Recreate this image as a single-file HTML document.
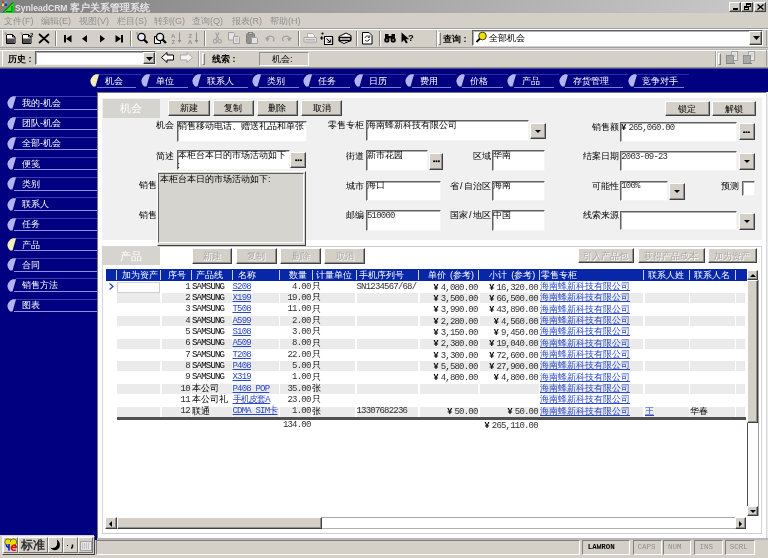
<!DOCTYPE html><html><head><meta charset="utf-8"><style>
*{box-sizing:border-box}
html,body{-webkit-font-smoothing:antialiased;margin:0;padding:0;width:768px;height:558px;overflow:hidden;background:#d4d0c8;font-family:"Liberation Sans",sans-serif;font-size:9px;color:#000}
.a{position:absolute}
.btn{position:absolute;background:#d4d0c8;border-top:1px solid #fff;border-left:1px solid #fff;border-right:1px solid #404040;border-bottom:1px solid #404040;box-shadow:inset -1px -1px 0 #909090;text-align:center;font-size:9px;white-space:nowrap}
.dbtn{color:#a0a0a0}
.fld{position:absolute;background:#fff;border-top:1px solid #606060;border-left:1px solid #606060;border-right:1px solid #f4f4f4;border-bottom:1px solid #f4f4f4;box-shadow:inset 1px 1px 0 #b0b0b0;font-size:9px;line-height:10px;white-space:nowrap;overflow:hidden}
.lbl{position:absolute;font-size:9px;line-height:10px;white-space:nowrap}
.sep{position:absolute;width:2px;border-left:1px solid #808080;border-right:1px solid #fff}
.t{position:absolute;white-space:nowrap;line-height:10px}
.mono{font-family:"Liberation Mono",monospace}
.yen{font-family:"Liberation Sans",sans-serif;font-weight:bold;letter-spacing:0;margin-right:2.2px;color:#000}
.m{font-family:"Liberation Mono",monospace;font-size:9px;letter-spacing:-0.8px;color:#303030}
.lf{position:absolute;width:9px;height:13px;border-radius:9px 0 0 9px / 13px 0 0 13px}
.ul{position:absolute;height:1px}
</style></head><body><div style="position:absolute;left:0;top:0;width:768px;height:558px;will-change:transform">
<div class="a" style="left:0;top:0;width:768px;height:13px;background:linear-gradient(to right,#808080,#cacaca)"></div>
<svg class="a" style="left:1px;top:1px" width="13" height="12" viewBox="0 0 13 12"><path d="M1 12 L13 0 L13 12 Z" fill="#10d010"/><path d="M3 11 L12 2 L12 11Z" fill="#30e030"/><path d="M2 11.5 L12 1.5" stroke="#005000" stroke-width="1"/><path d="M5 10.5 L11 10.5 L11 5" stroke="#007000" fill="none"/><rect x="1" y="0.5" width="2.5" height="2" fill="#e02020"/><rect x="3.5" y="0.5" width="2.5" height="2" fill="#30d0f0"/><rect x="1" y="2.5" width="2.5" height="2.5" fill="#f0e020"/><rect x="3.5" y="2.5" width="2.5" height="2.5" fill="#2030d0"/></svg>
<div class="t" style="left:15px;top:1.5px;color:#e4e4e4;font-weight:bold;font-size:8.6px;line-height:11px">SynleadCRM <span style="font-size:9.6px;font-weight:bold">客户关系管理系统</span></div>
<div class="btn" style="left:729px;top:1.5px;width:12px;height:10px"><div class="a" style="left:3px;top:5px;width:5px;height:2px;background:#000"></div></div>
<div class="btn" style="left:741px;top:1.5px;width:12px;height:10px"><div class="a" style="left:4px;top:0.5px;width:5px;height:4px;border:1px solid #000;border-top-width:2px"></div><div class="a" style="left:2px;top:3px;width:5px;height:4.5px;border:1px solid #000;border-top-width:2px;background:#d4d0c8"></div></div>
<div class="btn" style="left:754px;top:1.5px;width:12px;height:10px"><svg class="a" style="left:2px;top:1px" width="7" height="6"><path d="M0.5 0.5L6.5 5.5M6.5 0.5L0.5 5.5" stroke="#000" stroke-width="1.4"/></svg></div>
<div class="t" style="left:4px;top:16px;color:#909090;font-size:9px">文件(F)</div>
<div class="t" style="left:41px;top:16px;color:#909090;font-size:9px">编辑(E)</div>
<div class="t" style="left:79px;top:16px;color:#909090;font-size:9px">视图(V)</div>
<div class="t" style="left:117px;top:16px;color:#909090;font-size:9px">栏目(S)</div>
<div class="t" style="left:154px;top:16px;color:#909090;font-size:9px">转到(G)</div>
<div class="t" style="left:192px;top:16px;color:#909090;font-size:9px">查询(Q)</div>
<div class="t" style="left:231.5px;top:16px;color:#909090;font-size:9px">报表(R)</div>
<div class="t" style="left:270px;top:16px;color:#909090;font-size:9px">帮助(H)</div>
<div class="a" style="left:0;top:28px;width:768px;height:1px;background:#a0a0a0"></div>
<div class="a" style="left:0;top:29px;width:768px;height:1px;background:#fff"></div>
<div class="a" style="left:0;top:47px;width:768px;height:1px;background:#a0a0a0"></div>
<div class="a" style="left:0;top:49px;width:768px;height:1px;background:#b4b4b4"></div>
<div class="a" style="left:0;top:50px;width:768px;height:1px;background:#fff"></div>
<div class="a" style="left:0;top:67px;width:768px;height:1px;background:#909090"></div>
<div class="a" style="left:2px;top:30px;width:1px;height:16px;background:#fff"></div>
<div class="a" style="left:2px;top:50px;width:1px;height:16px;background:#fff"></div>
<div class="a" style="left:766px;top:30px;width:1px;height:16px;background:#a0a0a0"></div>
<div class="a" style="left:766px;top:50px;width:1px;height:16px;background:#a0a0a0"></div>
<svg class="a" style="left:4px;top:32px" width="12" height="12" viewBox="0 0 12 12"><path d="M2.5 2.5h6l2.5 2.5v6.5h-8.5z" fill="#fff" stroke="#000"/><path d="M8.5 2.5v2.5h2.5" fill="none" stroke="#000"/><rect x="3" y="6.5" width="7.5" height="4.5" fill="#505050"/><path d="M0 0.5l3 2M1.5 0v3M0 2h3" stroke="#a0a0a0" stroke-width="0.8"/></svg>
<svg class="a" style="left:20px;top:32px" width="14" height="12" viewBox="0 0 14 12"><path d="M2.5 2.5h6l2.5 2.5v6.5h-8.5z" fill="#fff" stroke="#000"/><path d="M8.5 2.5v2.5h2.5" fill="none" stroke="#000"/><rect x="3" y="6.5" width="7.5" height="4.5" fill="#505050"/><path d="M0 0.5l3 2M1.5 0v3" stroke="#a0a0a0" stroke-width="0.8"/><text x="10" y="5" font-size="6" font-weight="bold" font-family="Liberation Sans">2</text></svg>
<svg class="a" style="left:38px;top:33px" width="12" height="11" viewBox="0 0 12 11"><path d="M1 1L11 10M11 1L1 10" stroke="#000" stroke-width="1.7"/></svg>
<div class="sep" style="left:55px;top:31px;height:15px"></div>
<svg class="a" style="left:64px;top:35px" width="8" height="8" viewBox="0 0 8 8"><rect x="0" y="0" width="2" height="7.5" fill="#000"/><path d="M7.5 0L2 3.75L7.5 7.5Z" fill="#000"/></svg>
<svg class="a" style="left:82px;top:35px" width="6" height="8" viewBox="0 0 6 8"><path d="M5 0L0 3.75L5 7.5Z" fill="#000"/></svg>
<svg class="a" style="left:100px;top:35px" width="6" height="8" viewBox="0 0 6 8"><path d="M0 0L5 3.75L0 7.5Z" fill="#000"/></svg>
<svg class="a" style="left:115px;top:35px" width="8" height="8" viewBox="0 0 8 8"><rect x="6" y="0" width="2" height="7.5" fill="#000"/><path d="M0.5 0L6 3.75L0.5 7.5Z" fill="#000"/></svg>
<div class="sep" style="left:130px;top:31px;height:15px"></div>
<svg class="a" style="left:136px;top:32px" width="13" height="12" viewBox="0 0 13 12"><circle cx="5.5" cy="5" r="3.6" fill="#e8e8ff" stroke="#000" stroke-width="1.4"/><path d="M8 7.5L11.5 11" stroke="#000" stroke-width="2.2"/><path d="M0 0.5l2.5 2M1.2 0v3" stroke="#909090" stroke-width="0.8"/></svg>
<svg class="a" style="left:153px;top:32px" width="14" height="12" viewBox="0 0 14 12"><path d="M1.5 4.5h5l1 1v6h-6z" fill="#fff" stroke="#000"/><circle cx="7" cy="5" r="3.6" fill="#e8e8e8" stroke="#000" stroke-width="1.4"/><path d="M9.5 7.5L13 11" stroke="#000" stroke-width="2.2"/></svg>
<svg class="a" style="left:171px;top:32px" width="12" height="12" viewBox="0 0 12 12"><text x="0" y="5.5" font-size="6" font-weight="bold" font-family="Liberation Sans" fill="#909090">A</text><text x="0.5" y="11.5" font-size="6" font-weight="bold" font-family="Liberation Sans" fill="#909090">Z</text><path d="M8.5 0.5v9.5" stroke="#909090"/><path d="M6.5 8l2 3l2-3z" fill="#909090"/></svg>
<svg class="a" style="left:188px;top:32px" width="12" height="12" viewBox="0 0 12 12"><text x="0.5" y="5.5" font-size="6" font-weight="bold" font-family="Liberation Sans" fill="#909090">Z</text><text x="0" y="11.5" font-size="6" font-weight="bold" font-family="Liberation Sans" fill="#909090">A</text><path d="M8.5 0.5v9.5" stroke="#909090"/><path d="M6.5 8l2 3l2-3z" fill="#909090"/></svg>
<div class="sep" style="left:204px;top:31px;height:15px"></div>
<svg class="a" style="left:213px;top:32px" width="9" height="12" viewBox="0 0 9 12"><circle cx="2" cy="9.3" r="1.8" fill="none" stroke="#a0a0a0" stroke-width="1.1"/><circle cx="6.6" cy="9.3" r="1.8" fill="none" stroke="#a0a0a0" stroke-width="1.1"/><path d="M2.8 7.5L6 0.5M5.8 7.5L2.6 0.5" stroke="#a0a0a0" stroke-width="1.1"/></svg>
<svg class="a" style="left:228px;top:32px" width="13" height="12" viewBox="0 0 13 12"><path d="M0.5 0.5h5l1 1v6.5h-6z" fill="#e4e4e4" stroke="#a0a0a0"/><path d="M5.5 4.5h5l1 1v6h-6z" fill="#e4e4e4" stroke="#a0a0a0"/><path d="M7 7h3M7 9h3" stroke="#b0b0b0"/></svg>
<svg class="a" style="left:246px;top:32px" width="13" height="12" viewBox="0 0 13 12"><rect x="0.5" y="1.5" width="8" height="10" rx="1" fill="#909090" stroke="#808080"/><rect x="2.5" y="0.5" width="4" height="2" fill="#c0c0c0" stroke="#808080"/><path d="M5.5 5.5h5l1 1v5h-6z" fill="#e4e4e4" stroke="#a0a0a0"/></svg>
<svg class="a" style="left:264px;top:34px" width="12" height="8" viewBox="0 0 12 8"><path d="M3 6.5C2 3 5 1.5 8 2.5C10.5 3.5 10.5 6 9 7" stroke="#a0a0a0" fill="none" stroke-width="1.3"/><path d="M0.5 3.5L3.5 7.5L5.5 4z" fill="#a0a0a0"/></svg>
<svg class="a" style="left:281px;top:34px" width="12" height="8" viewBox="0 0 12 8"><path d="M8.5 6.5C9.5 3 6.5 1.5 3.5 2.5C1 3.5 1 6 2.5 7" stroke="#a0a0a0" fill="none" stroke-width="1.3"/><path d="M11 3.5L8 7.5L6 4z" fill="#a0a0a0"/></svg>
<div class="sep" style="left:298px;top:31px;height:15px"></div>
<svg class="a" style="left:303px;top:32px" width="14" height="12" viewBox="0 0 14 12"><path d="M4.5 1.5h5l2 2v2.5h-7z" fill="#f4f4f4" stroke="#b0b0b0"/><path d="M1 5.5h12.5v4.5h-12.5z" fill="#e4e4e4" stroke="#a8a8a8"/><path d="M2.5 7.8h9.5" stroke="#a8a8a8" stroke-width="1.2"/><path d="M2 10.8h11" stroke="#b8b8b8"/></svg>
<svg class="a" style="left:320px;top:32px" width="14" height="13" viewBox="0 0 14 13"><circle cx="2.5" cy="1.5" r="1.1" fill="#000"/><path d="M0 6h3.5M1.7 4.3v3.4" stroke="#000" stroke-width="1.1"/><rect x="4.5" y="4.5" width="8" height="8" fill="#fff" stroke="#000"/><rect x="6" y="6" width="5" height="5" fill="#d8d8d8"/><path d="M6.5 6.5l3.5 3.5M10.3 7.5v2.8h-2.8" stroke="#000" fill="none"/><path d="M12.5 5v8h-8" stroke="#000" stroke-width="1.4" fill="none"/></svg>
<svg class="a" style="left:338px;top:32px" width="14" height="12" viewBox="0 0 14 12"><path d="M1 4.5l7-3.5l5 2.5v5l-7 3l-5-2.5z" fill="#fff" stroke="#000"/><path d="M1.5 5.5h11v3h-11z" fill="#fff" stroke="#000" stroke-width="1.3"/><path d="M4 7h6" stroke="#808080"/></svg>
<div class="sep" style="left:356px;top:31px;height:15px"></div>
<svg class="a" style="left:361px;top:32px" width="13" height="13" viewBox="0 0 13 13"><path d="M1.5 0.5h6.5l3 3v8.5h-9.5z" fill="#fff" stroke="#000"/><path d="M4 6a2.5 2.5 0 0 1 4.3-1.3M8.5 7a2.5 2.5 0 0 1-4.3 1.3" stroke="#303030" fill="none"/><path d="M8.8 3.5v1.8h-1.8" stroke="#303030" fill="none"/></svg>
<div class="sep" style="left:379px;top:31px;height:15px"></div>
<svg class="a" style="left:384px;top:33px" width="12" height="10" viewBox="0 0 12 10"><circle cx="2.8" cy="7" r="2.6" fill="#000"/><circle cx="9.2" cy="7" r="2.6" fill="#000"/><rect x="1" y="1" width="3.5" height="5" fill="#000"/><rect x="7.5" y="1" width="3.5" height="5" fill="#000"/><rect x="4" y="3" width="4" height="2.5" fill="#000"/><circle cx="2.8" cy="7" r="1" fill="#808080"/><circle cx="9.2" cy="7" r="1" fill="#808080"/></svg>
<svg class="a" style="left:401px;top:32px" width="14" height="12" viewBox="0 0 14 12"><path d="M0.5 0.5v10l2.5-2.5l2 3.5l1.8-1l-2-3.3h3.5z" fill="#000"/><text x="7" y="9" font-size="9.5" font-weight="bold" font-family="Liberation Sans">?</text></svg>
<div class="a" style="left:436px;top:30px;width:1px;height:17px;background:#a0a0a0"></div>
<div class="a" style="left:437px;top:30px;width:1px;height:17px;background:#fafafa"></div>
<div class="a" style="left:438px;top:32px;width:3px;height:13px;border-left:1px solid #fff;border-top:1px solid #fff;border-right:1px solid #808080;border-bottom:1px solid #808080"></div>
<div class="t" style="left:443px;top:34px;font-size:9px;font-weight:bold">查询 :</div>
<div class="fld" style="left:472px;top:30px;width:291px;height:16px;border-right:1px solid #fff;border-bottom:1px solid #fff"></div>
<svg class="a" style="left:475px;top:31px" width="13" height="12" viewBox="0 0 13 12"><circle cx="7.5" cy="5" r="3.8" fill="#f0e000" stroke="#404000"/><path d="M5 7.5L1.5 11" stroke="#000" stroke-width="1.8"/></svg>
<div class="t" style="left:489px;top:33px;font-size:9px">全部机会</div>
<div class="btn" style="left:749px;top:30.5px;width:12.5px;height:14px"><svg class="a" style="left:2.5px;top:4.5px" width="7" height="4"><path d="M0 0h7L3.5 4z" fill="#000"/></svg></div>
<div class="t" style="left:8px;top:54px;font-size:9px;font-weight:bold">历史 :</div>
<div class="fld" style="left:35px;top:51px;width:121px;height:14px"></div>
<div class="btn" style="left:143px;top:52px;width:12px;height:12px"><svg class="a" style="left:2px;top:4px" width="7" height="4"><path d="M0 0h7L3.5 4z" fill="#000"/></svg></div>
<svg class="a" style="left:161px;top:52px" width="13" height="11" viewBox="0 0 13 11"><path d="M0.5 5.5L6 0.5V3H12.5V8H6V10.5Z" fill="#fff" stroke="#000"/></svg>
<svg class="a" style="left:180px;top:52px" width="13" height="11" viewBox="0 0 13 11"><path d="M12.5 5.5L7 0.5V3H0.5V8H7V10.5Z" fill="#f4f4f4" stroke="#a8a8a8"/></svg>
<div class="a" style="left:198px;top:51px;width:1px;height:16px;background:#a0a0a0"></div>
<div class="a" style="left:199px;top:51px;width:1px;height:16px;background:#fafafa"></div>
<div class="a" style="left:201.5px;top:53px;width:3px;height:12px;border-left:1px solid #fff;border-top:1px solid #fff;border-right:1px solid #808080;border-bottom:1px solid #808080"></div>
<div class="t" style="left:212px;top:54px;font-size:9px;font-weight:bold">线索 :</div>
<div class="a" style="left:259px;top:51.5px;width:50px;height:14.5px;border-top:1px solid #909090;border-left:1px solid #909090;border-bottom:1px solid #fff;border-right:1px solid #fff"></div>
<div class="t" style="left:272px;top:54px;font-size:9px">机会:</div>
<div class="a" style="left:715px;top:51px;width:1px;height:16px;background:#a0a0a0"></div>
<div class="a" style="left:716px;top:51px;width:1px;height:16px;background:#fafafa"></div>
<div class="a" style="left:717.5px;top:53px;width:3px;height:12px;border-left:1px solid #fff;border-top:1px solid #fff;border-right:1px solid #808080;border-bottom:1px solid #808080"></div>
<svg class="a" style="left:726px;top:51px" width="13" height="13" viewBox="0 0 13 13"><rect x="5.5" y="0.5" width="6" height="9" fill="#e8e8e8" stroke="#a0a0a0"/><path d="M7 3h3M7 5h3" stroke="#c0c0c0"/><rect x="0.5" y="4.5" width="7" height="8" fill="#a8a8a8" stroke="#909090"/><path d="M0 12.5h9" stroke="#808080"/></svg>
<svg class="a" style="left:743px;top:51px" width="13" height="13" viewBox="0 0 13 13"><rect x="5.5" y="0.5" width="6" height="9" fill="#e8e8e8" stroke="#a0a0a0"/><path d="M7 3h3M7 5h3" stroke="#c0c0c0"/><rect x="0.5" y="4.5" width="7" height="8" fill="#a8a8a8" stroke="#909090"/><path d="M0 12.5h9" stroke="#808080"/></svg>
<div class="a" style="left:0;top:68px;width:768px;height:1px;background:#50508c"></div>
<div class="a" style="left:0;top:69px;width:768px;height:466px;background:#000080"></div>
<svg class="a" style="left:90.1px;top:74.2px" width="10" height="13" viewBox="-0.5 -0.2 10 13"><path d="M5.2 0 L8.6 0 L5 12.4 L2.6 12.4 C0.6 10.4 -0.3 8 0 6 C0.4 3.4 2.6 1 5.2 0 Z" fill="#f0f0b8"/></svg>
<div class="ul" style="left:98.6px;top:74px;width:42.9px;background:#2c2ca4"></div>
<div class="ul" style="left:96.6px;top:87px;width:39.9px;background:#7c7cd4"></div>
<div class="t" style="left:104.6px;top:75.8px;color:#fff;font-size:9px">机会</div>
<svg class="a" style="left:141.0px;top:74.2px" width="10" height="13" viewBox="-0.5 -0.2 10 13"><path d="M5.2 0 L8.6 0 L5 12.4 L2.6 12.4 C0.6 10.4 -0.3 8 0 6 C0.4 3.4 2.6 1 5.2 0 Z" fill="#b4b4f0"/></svg>
<div class="ul" style="left:149.5px;top:74px;width:43.3px;background:#2c2ca4"></div>
<div class="ul" style="left:147.5px;top:87px;width:40.3px;background:#7c7cd4"></div>
<div class="t" style="left:155.5px;top:75.8px;color:#fff;font-size:9px">单位</div>
<svg class="a" style="left:192.3px;top:74.2px" width="10" height="13" viewBox="-0.5 -0.2 10 13"><path d="M5.2 0 L8.6 0 L5 12.4 L2.6 12.4 C0.6 10.4 -0.3 8 0 6 C0.4 3.4 2.6 1 5.2 0 Z" fill="#b4b4f0"/></svg>
<div class="ul" style="left:200.8px;top:74px;width:52.1px;background:#2c2ca4"></div>
<div class="ul" style="left:198.8px;top:87px;width:49.1px;background:#7c7cd4"></div>
<div class="t" style="left:206.8px;top:75.8px;color:#fff;font-size:9px">联系人</div>
<svg class="a" style="left:252.4px;top:74.2px" width="10" height="13" viewBox="-0.5 -0.2 10 13"><path d="M5.2 0 L8.6 0 L5 12.4 L2.6 12.4 C0.6 10.4 -0.3 8 0 6 C0.4 3.4 2.6 1 5.2 0 Z" fill="#b4b4f0"/></svg>
<div class="ul" style="left:260.9px;top:74px;width:42.7px;background:#2c2ca4"></div>
<div class="ul" style="left:258.9px;top:87px;width:39.7px;background:#7c7cd4"></div>
<div class="t" style="left:266.9px;top:75.8px;color:#fff;font-size:9px">类别</div>
<svg class="a" style="left:303.1px;top:74.2px" width="10" height="13" viewBox="-0.5 -0.2 10 13"><path d="M5.2 0 L8.6 0 L5 12.4 L2.6 12.4 C0.6 10.4 -0.3 8 0 6 C0.4 3.4 2.6 1 5.2 0 Z" fill="#b4b4f0"/></svg>
<div class="ul" style="left:311.6px;top:74px;width:43.0px;background:#2c2ca4"></div>
<div class="ul" style="left:309.6px;top:87px;width:40.0px;background:#7c7cd4"></div>
<div class="t" style="left:317.6px;top:75.8px;color:#fff;font-size:9px">任务</div>
<svg class="a" style="left:354.1px;top:74.2px" width="10" height="13" viewBox="-0.5 -0.2 10 13"><path d="M5.2 0 L8.6 0 L5 12.4 L2.6 12.4 C0.6 10.4 -0.3 8 0 6 C0.4 3.4 2.6 1 5.2 0 Z" fill="#b4b4f0"/></svg>
<div class="ul" style="left:362.6px;top:74px;width:43.0px;background:#2c2ca4"></div>
<div class="ul" style="left:360.6px;top:87px;width:40.0px;background:#7c7cd4"></div>
<div class="t" style="left:368.6px;top:75.8px;color:#fff;font-size:9px">日历</div>
<svg class="a" style="left:405.1px;top:74.2px" width="10" height="13" viewBox="-0.5 -0.2 10 13"><path d="M5.2 0 L8.6 0 L5 12.4 L2.6 12.4 C0.6 10.4 -0.3 8 0 6 C0.4 3.4 2.6 1 5.2 0 Z" fill="#b4b4f0"/></svg>
<div class="ul" style="left:413.6px;top:74px;width:42.6px;background:#2c2ca4"></div>
<div class="ul" style="left:411.6px;top:87px;width:39.6px;background:#7c7cd4"></div>
<div class="t" style="left:419.6px;top:75.8px;color:#fff;font-size:9px">费用</div>
<svg class="a" style="left:455.7px;top:74.2px" width="10" height="13" viewBox="-0.5 -0.2 10 13"><path d="M5.2 0 L8.6 0 L5 12.4 L2.6 12.4 C0.6 10.4 -0.3 8 0 6 C0.4 3.4 2.6 1 5.2 0 Z" fill="#b4b4f0"/></svg>
<div class="ul" style="left:464.2px;top:74px;width:43.6px;background:#2c2ca4"></div>
<div class="ul" style="left:462.2px;top:87px;width:40.6px;background:#7c7cd4"></div>
<div class="t" style="left:470.2px;top:75.8px;color:#fff;font-size:9px">价格</div>
<svg class="a" style="left:507.3px;top:74.2px" width="10" height="13" viewBox="-0.5 -0.2 10 13"><path d="M5.2 0 L8.6 0 L5 12.4 L2.6 12.4 C0.6 10.4 -0.3 8 0 6 C0.4 3.4 2.6 1 5.2 0 Z" fill="#b4b4f0"/></svg>
<div class="ul" style="left:515.8px;top:74px;width:43.6px;background:#2c2ca4"></div>
<div class="ul" style="left:513.8px;top:87px;width:40.6px;background:#7c7cd4"></div>
<div class="t" style="left:521.8px;top:75.8px;color:#fff;font-size:9px">产品</div>
<svg class="a" style="left:558.9px;top:74.2px" width="10" height="13" viewBox="-0.5 -0.2 10 13"><path d="M5.2 0 L8.6 0 L5 12.4 L2.6 12.4 C0.6 10.4 -0.3 8 0 6 C0.4 3.4 2.6 1 5.2 0 Z" fill="#b4b4f0"/></svg>
<div class="ul" style="left:567.4px;top:74px;width:60.6px;background:#2c2ca4"></div>
<div class="ul" style="left:565.4px;top:87px;width:57.6px;background:#7c7cd4"></div>
<div class="t" style="left:573.4px;top:75.8px;color:#fff;font-size:9px">存货管理</div>
<svg class="a" style="left:627.5px;top:74.2px" width="10" height="13" viewBox="-0.5 -0.2 10 13"><path d="M5.2 0 L8.6 0 L5 12.4 L2.6 12.4 C0.6 10.4 -0.3 8 0 6 C0.4 3.4 2.6 1 5.2 0 Z" fill="#b4b4f0"/></svg>
<div class="ul" style="left:636.0px;top:74px;width:53.0px;background:#2c2ca4"></div>
<div class="ul" style="left:634.0px;top:87px;width:50.0px;background:#7c7cd4"></div>
<div class="t" style="left:642.0px;top:75.8px;color:#fff;font-size:9px">竞争对手</div>
<svg class="a" style="left:7.3px;top:96.3px" width="10" height="13" viewBox="-0.5 -0.2 10 13"><path d="M5.2 0 L8.6 0 L5 12.4 L2.6 12.4 C0.6 10.4 -0.3 8 0 6 C0.4 3.4 2.6 1 5.2 0 Z" fill="#b4b4f0"/></svg>
<div class="ul" style="left:16px;top:96.2px;width:81px;background:#3c3cb0"></div>
<div class="ul" style="left:14px;top:108.6px;width:83px;background:#9090e0"></div>
<div class="t" style="left:22px;top:97.8px;color:#fff;font-size:9px">我的-机会</div>
<svg class="a" style="left:7.3px;top:116.5px" width="10" height="13" viewBox="-0.5 -0.2 10 13"><path d="M5.2 0 L8.6 0 L5 12.4 L2.6 12.4 C0.6 10.4 -0.3 8 0 6 C0.4 3.4 2.6 1 5.2 0 Z" fill="#b4b4f0"/></svg>
<div class="ul" style="left:16px;top:116.5px;width:81px;background:#3c3cb0"></div>
<div class="ul" style="left:14px;top:128.8px;width:83px;background:#9090e0"></div>
<div class="t" style="left:22px;top:118.0px;color:#fff;font-size:9px">团队-机会</div>
<svg class="a" style="left:7.3px;top:136.8px" width="10" height="13" viewBox="-0.5 -0.2 10 13"><path d="M5.2 0 L8.6 0 L5 12.4 L2.6 12.4 C0.6 10.4 -0.3 8 0 6 C0.4 3.4 2.6 1 5.2 0 Z" fill="#b4b4f0"/></svg>
<div class="ul" style="left:16px;top:136.7px;width:81px;background:#3c3cb0"></div>
<div class="ul" style="left:14px;top:149.1px;width:83px;background:#9090e0"></div>
<div class="t" style="left:22px;top:138.3px;color:#fff;font-size:9px">全部-机会</div>
<svg class="a" style="left:7.3px;top:157.1px" width="10" height="13" viewBox="-0.5 -0.2 10 13"><path d="M5.2 0 L8.6 0 L5 12.4 L2.6 12.4 C0.6 10.4 -0.3 8 0 6 C0.4 3.4 2.6 1 5.2 0 Z" fill="#b4b4f0"/></svg>
<div class="ul" style="left:16px;top:156.9px;width:81px;background:#3c3cb0"></div>
<div class="ul" style="left:14px;top:169.3px;width:83px;background:#9090e0"></div>
<div class="t" style="left:22px;top:158.6px;color:#fff;font-size:9px">便笺</div>
<svg class="a" style="left:7.3px;top:177.3px" width="10" height="13" viewBox="-0.5 -0.2 10 13"><path d="M5.2 0 L8.6 0 L5 12.4 L2.6 12.4 C0.6 10.4 -0.3 8 0 6 C0.4 3.4 2.6 1 5.2 0 Z" fill="#b4b4f0"/></svg>
<div class="ul" style="left:16px;top:177.2px;width:81px;background:#3c3cb0"></div>
<div class="ul" style="left:14px;top:189.6px;width:83px;background:#9090e0"></div>
<div class="t" style="left:22px;top:178.8px;color:#fff;font-size:9px">类别</div>
<svg class="a" style="left:7.3px;top:197.6px" width="10" height="13" viewBox="-0.5 -0.2 10 13"><path d="M5.2 0 L8.6 0 L5 12.4 L2.6 12.4 C0.6 10.4 -0.3 8 0 6 C0.4 3.4 2.6 1 5.2 0 Z" fill="#b4b4f0"/></svg>
<div class="ul" style="left:16px;top:197.4px;width:81px;background:#3c3cb0"></div>
<div class="ul" style="left:14px;top:209.8px;width:83px;background:#9090e0"></div>
<div class="t" style="left:22px;top:199.1px;color:#fff;font-size:9px">联系人</div>
<svg class="a" style="left:7.3px;top:217.8px" width="10" height="13" viewBox="-0.5 -0.2 10 13"><path d="M5.2 0 L8.6 0 L5 12.4 L2.6 12.4 C0.6 10.4 -0.3 8 0 6 C0.4 3.4 2.6 1 5.2 0 Z" fill="#b4b4f0"/></svg>
<div class="ul" style="left:16px;top:217.7px;width:81px;background:#3c3cb0"></div>
<div class="ul" style="left:14px;top:230.1px;width:83px;background:#9090e0"></div>
<div class="t" style="left:22px;top:219.3px;color:#fff;font-size:9px">任务</div>
<svg class="a" style="left:7.3px;top:238.1px" width="10" height="13" viewBox="-0.5 -0.2 10 13"><path d="M5.2 0 L8.6 0 L5 12.4 L2.6 12.4 C0.6 10.4 -0.3 8 0 6 C0.4 3.4 2.6 1 5.2 0 Z" fill="#f0f0b8"/></svg>
<div class="ul" style="left:16px;top:237.9px;width:81px;background:#3c3cb0"></div>
<div class="ul" style="left:14px;top:250.3px;width:83px;background:#9090e0"></div>
<div class="t" style="left:22px;top:239.6px;color:#fff;font-size:9px">产品</div>
<svg class="a" style="left:7.3px;top:258.3px" width="10" height="13" viewBox="-0.5 -0.2 10 13"><path d="M5.2 0 L8.6 0 L5 12.4 L2.6 12.4 C0.6 10.4 -0.3 8 0 6 C0.4 3.4 2.6 1 5.2 0 Z" fill="#b4b4f0"/></svg>
<div class="ul" style="left:16px;top:258.2px;width:81px;background:#3c3cb0"></div>
<div class="ul" style="left:14px;top:270.6px;width:83px;background:#9090e0"></div>
<div class="t" style="left:22px;top:259.8px;color:#fff;font-size:9px">合同</div>
<svg class="a" style="left:7.3px;top:278.6px" width="10" height="13" viewBox="-0.5 -0.2 10 13"><path d="M5.2 0 L8.6 0 L5 12.4 L2.6 12.4 C0.6 10.4 -0.3 8 0 6 C0.4 3.4 2.6 1 5.2 0 Z" fill="#b4b4f0"/></svg>
<div class="ul" style="left:16px;top:278.4px;width:81px;background:#3c3cb0"></div>
<div class="ul" style="left:14px;top:290.9px;width:83px;background:#9090e0"></div>
<div class="t" style="left:22px;top:280.1px;color:#fff;font-size:9px">销售方法</div>
<svg class="a" style="left:7.3px;top:298.8px" width="10" height="13" viewBox="-0.5 -0.2 10 13"><path d="M5.2 0 L8.6 0 L5 12.4 L2.6 12.4 C0.6 10.4 -0.3 8 0 6 C0.4 3.4 2.6 1 5.2 0 Z" fill="#b4b4f0"/></svg>
<div class="ul" style="left:16px;top:298.7px;width:81px;background:#3c3cb0"></div>
<div class="ul" style="left:14px;top:311.1px;width:83px;background:#9090e0"></div>
<div class="t" style="left:22px;top:300.3px;color:#fff;font-size:9px">图表</div>
<div class="a" style="left:97px;top:92px;width:671px;height:446px;background:#fff;border-left:1px solid #787878;border-top:1px solid #787878"></div>
<div class="a" style="left:766px;top:92px;width:1px;height:446px;background:#d8d8d8"></div>
<div class="a" style="left:767px;top:92px;width:1px;height:446px;background:#ececec"></div>
<div class="a" style="left:102px;top:98px;width:660px;height:142px;background:#f0f0f0"></div>
<div class="a" style="left:102.5px;top:98.5px;width:57.5px;height:19px;background:#d6d4ce"></div>
<div class="t" style="left:120px;top:102px;color:#fff;font-size:11px;line-height:12px">机会</div>
<div class="btn" style="left:168.3px;top:100.0px;width:41.3px;height:15.5px;line-height:14.9px;font-size:9px">新建</div>
<div class="btn" style="left:212.5px;top:100.0px;width:41.3px;height:15.5px;line-height:14.9px;font-size:9px">复制</div>
<div class="btn" style="left:256.7px;top:100.0px;width:41.3px;height:15.5px;line-height:14.9px;font-size:9px">删除</div>
<div class="btn" style="left:300.9px;top:100.0px;width:41.3px;height:15.5px;line-height:14.9px;font-size:9px">取消</div>
<div class="btn" style="left:665.0px;top:100.8px;width:44.6px;height:14.9px;line-height:14.3px;font-size:9px">锁定</div>
<div class="btn" style="left:712.3px;top:100.8px;width:44.2px;height:14.9px;line-height:14.3px;font-size:9px">解锁</div>
<div class="lbl" style="right:594.0px;top:120.1px">机会</div>
<div class="fld " style="left:176.6px;top:121.0px;width:130.8px;height:20.5px;"><div style="position:relative;top:-1.4px">销售移动电话、赠送礼品和单张</div></div>
<div class="lbl" style="right:594.0px;top:150.6px">简述</div>
<div class="fld " style="left:176.6px;top:150.3px;width:113.2px;height:19.7px;"><div style="position:relative;top:-1.4px">本柜台本日的市场活动如下<br>:</div></div>
<div class="btn" style="left:290.4px;top:152.0px;width:15.3px;height:16.2px"><svg class="a" style="left:3.2px;top:6.1px" width="7" height="2.5"><circle cx="1.1" cy="1.2" r="1.05" fill="#000"/><circle cx="3.5" cy="1.2" r="1.05" fill="#000"/><circle cx="5.9" cy="1.2" r="1.05" fill="#000"/></svg></div>
<div class="lbl" style="right:611.5px;top:180.1px">销售</div>
<div class="lbl" style="right:611.5px;top:209.6px">销售</div>
<div class="a" style="left:156.5px;top:171px;width:149.5px;height:74.5px;background:#d6d4ce;border-top:1px solid #fff;border-left:1px solid #fff;border-right:1.5px solid #404040;border-bottom:1.5px solid #404040"></div>
<div class="a" style="left:158px;top:172.5px;width:145.5px;height:70.5px;border-top:1px solid #606060;border-left:1px solid #606060;border-right:1px solid #fff;border-bottom:1px solid #fff"></div>
<div class="t" style="left:160px;top:174px;font-size:9px">本柜台本日的市场活动如下:</div>
<div class="lbl" style="right:404.0px;top:120.1px">零售专柜</div>
<div class="fld " style="left:366.0px;top:120.3px;width:162.8px;height:20.3px;"><div style="position:relative;top:-1.4px">海南蜂新科技有限公司</div></div>
<div class="btn" style="left:530.3px;top:122.8px;width:15.3px;height:16.6px"><svg class="a" style="left:3.7px;top:5.8px" width="6" height="3"><path d="M0 0h6L3 3z" fill="#000"/></svg></div>
<div class="lbl" style="right:404.0px;top:151.1px">街道</div>
<div class="fld " style="left:366.0px;top:150.3px;width:61.8px;height:20.3px;"><div style="position:relative;top:-1.4px">新市花园</div></div>
<div class="btn" style="left:428.8px;top:152.5px;width:14.6px;height:17.2px"><svg class="a" style="left:2.8px;top:6.6px" width="7" height="2.5"><circle cx="1.1" cy="1.2" r="1.05" fill="#000"/><circle cx="3.5" cy="1.2" r="1.05" fill="#000"/><circle cx="5.9" cy="1.2" r="1.05" fill="#000"/></svg></div>
<div class="lbl" style="right:277.5px;top:151.1px">区域</div>
<div class="fld " style="left:491.9px;top:150.3px;width:53.1px;height:20.3px;"><div style="position:relative;top:-1.4px">华南</div></div>
<div class="lbl" style="right:404.0px;top:180.6px">城市</div>
<div class="fld " style="left:366.0px;top:180.6px;width:75.3px;height:20.4px;"><div style="position:relative;top:-1.4px">海口</div></div>
<div class="lbl" style="right:277.5px;top:180.6px">省<span style="margin:0 1px">/</span>自治区</div>
<div class="fld " style="left:491.9px;top:180.6px;width:53.1px;height:20.4px;"><div style="position:relative;top:-1.4px">海南</div></div>
<div class="lbl" style="right:404.0px;top:210.1px">邮编</div>
<div class="fld " style="left:366.0px;top:210.3px;width:75.3px;height:20.3px;"><div style="position:relative;top:-1.4px"><span class="m">510000</span></div></div>
<div class="lbl" style="right:277.5px;top:210.1px">国家<span style="margin:0 1px">/</span>地区</div>
<div class="fld " style="left:491.9px;top:210.3px;width:53.1px;height:20.3px;"><div style="position:relative;top:-1.4px">中国</div></div>
<div class="lbl" style="right:149.5px;top:121.6px">销售额</div>
<div class="fld " style="left:620.2px;top:122.0px;width:116.5px;height:19.5px;"><div style="position:relative;top:-1.4px"><span class="m"><span class=yen>¥</span>265,060.00</span></div></div>
<div class="btn" style="left:739.4px;top:123.0px;width:15.2px;height:17.0px"><svg class="a" style="left:3.1px;top:6.5px" width="7" height="2.5"><circle cx="1.1" cy="1.2" r="1.05" fill="#000"/><circle cx="3.5" cy="1.2" r="1.05" fill="#000"/><circle cx="5.9" cy="1.2" r="1.05" fill="#000"/></svg></div>
<div class="lbl" style="right:149.5px;top:151.1px">结案日期</div>
<div class="fld " style="left:620.2px;top:151.0px;width:116.5px;height:19.8px;"><div style="position:relative;top:-1.4px"><span class="m">2003-09-23</span></div></div>
<div class="btn" style="left:739.4px;top:152.9px;width:15.2px;height:17.1px"><svg class="a" style="left:3.6px;top:6.0px" width="6" height="3"><path d="M0 0h6L3 3z" fill="#000"/></svg></div>
<div class="lbl" style="right:149.5px;top:180.6px">可能性</div>
<div class="fld " style="left:620.2px;top:180.8px;width:47.7px;height:20.2px;"><div style="position:relative;top:-1.4px"><span class="m">100%</span></div></div>
<div class="btn" style="left:669.2px;top:183.0px;width:15.5px;height:16.8px"><svg class="a" style="left:3.8px;top:5.9px" width="6" height="3"><path d="M0 0h6L3 3z" fill="#000"/></svg></div>
<div class="lbl" style="right:29.0px;top:180.6px">预测</div>
<div class="fld " style="left:741.6px;top:181.3px;width:13.0px;height:14.4px;"><div style="position:relative;top:-1.4px"></div></div>
<div class="lbl" style="right:149.5px;top:210.1px">线索来源</div>
<div class="fld " style="left:620.2px;top:210.6px;width:116.5px;height:19.8px;"><div style="position:relative;top:-1.4px"></div></div>
<div class="btn" style="left:739.4px;top:212.5px;width:15.2px;height:17.1px"><svg class="a" style="left:3.6px;top:6.0px" width="6" height="3"><path d="M0 0h6L3 3z" fill="#000"/></svg></div>
<div class="a" style="left:102px;top:245.5px;width:660px;height:288px;border-left:1px solid #d4d4d4;border-top:1px solid #cccccc;border-right:1px solid #d4d4d4;border-bottom:1px solid #cccccc"></div>
<div class="a" style="left:102.5px;top:246px;width:57.5px;height:19px;background:#d6d4ce"></div>
<div class="t" style="left:120px;top:249.5px;color:#fff;font-size:11px;line-height:12px">产品</div>
<div class="btn" style="left:191.8px;top:248.0px;width:40.7px;height:16.0px;line-height:15.4px;color:#a8a8a8;text-shadow:1px 1px 0 #fff;font-size:9px">新建</div>
<div class="btn" style="left:236.0px;top:248.0px;width:40.7px;height:16.0px;line-height:15.4px;color:#a8a8a8;text-shadow:1px 1px 0 #fff;font-size:9px">复制</div>
<div class="btn" style="left:280.2px;top:248.0px;width:40.7px;height:16.0px;line-height:15.4px;color:#a8a8a8;text-shadow:1px 1px 0 #fff;font-size:9px">删除</div>
<div class="btn" style="left:324.4px;top:248.0px;width:40.7px;height:16.0px;line-height:15.4px;color:#a8a8a8;text-shadow:1px 1px 0 #fff;font-size:9px">取消</div>
<div class="btn" style="left:577.7px;top:247.9px;width:56.3px;height:15.6px;line-height:15.0px;color:#a8a8a8;text-shadow:1px 1px 0 #fff;font-size:9px">引入产品包</div>
<div class="btn" style="left:637.5px;top:247.9px;width:67.0px;height:15.6px;line-height:15.0px;color:#a8a8a8;text-shadow:1px 1px 0 #fff;font-size:9px">获得产品成本</div>
<div class="btn" style="left:708.0px;top:247.9px;width:48.5px;height:15.6px;line-height:15.0px;color:#a8a8a8;text-shadow:1px 1px 0 #fff;font-size:9px">加为资产</div>
<div class="a" style="left:105.7px;top:268.7px;width:641px;height:12.2px;background:#0827a8"></div>
<div class="a" style="left:116.0px;top:270px;width:1px;height:10px;background:#c8d0f0"></div>
<div class="a" style="left:160.4px;top:270px;width:1px;height:10px;background:#c8d0f0"></div>
<div class="a" style="left:190.9px;top:270px;width:1px;height:10px;background:#c8d0f0"></div>
<div class="a" style="left:231.9px;top:270px;width:1px;height:10px;background:#c8d0f0"></div>
<div class="a" style="left:279.1px;top:270px;width:1px;height:10px;background:#c8d0f0"></div>
<div class="a" style="left:311.6px;top:270px;width:1px;height:10px;background:#c8d0f0"></div>
<div class="a" style="left:355.5px;top:270px;width:1px;height:10px;background:#c8d0f0"></div>
<div class="a" style="left:418.4px;top:270px;width:1px;height:10px;background:#c8d0f0"></div>
<div class="a" style="left:478.3px;top:270px;width:1px;height:10px;background:#c8d0f0"></div>
<div class="a" style="left:539.0px;top:270px;width:1px;height:10px;background:#c8d0f0"></div>
<div class="a" style="left:643.3px;top:270px;width:1px;height:10px;background:#c8d0f0"></div>
<div class="a" style="left:689.2px;top:270px;width:1px;height:10px;background:#c8d0f0"></div>
<div class="a" style="left:735.2px;top:270px;width:1px;height:10px;background:#c8d0f0"></div>
<div class="t" style="left:122.4px;top:270px;color:#fff;font-size:9px">加为资产</div>
<div class="t" style="left:168.3px;top:270px;color:#fff;font-size:9px">序号</div>
<div class="t" style="left:195.7px;top:270px;color:#fff;font-size:9px">产品线</div>
<div class="t" style="left:237.5px;top:270px;color:#fff;font-size:9px">名称</div>
<div class="t" style="left:288.8px;top:270px;color:#fff;font-size:9px">数量</div>
<div class="t" style="left:315.6px;top:270px;color:#fff;font-size:9px">计量单位</div>
<div class="t" style="left:359.0px;top:270px;color:#fff;font-size:9px">手机序列号</div>
<div class="t" style="left:428.0px;top:270px;color:#fff;font-size:9px">单价<span style=margin-left:1.5px> (</span>参考)</div>
<div class="t" style="left:489.2px;top:270px;color:#fff;font-size:9px">小计<span style=margin-left:1.5px> (</span>参考)</div>
<div class="t" style="left:541.3px;top:270px;color:#fff;font-size:9px">零售专柜</div>
<div class="t" style="left:648.0px;top:270px;color:#fff;font-size:9px">联系人姓</div>
<div class="t" style="left:694.0px;top:270px;color:#fff;font-size:9px">联系人名</div>
<div class="t m" style="right:578.2px;top:281.7px;">1</div>
<div class="t m" style="left:192.0px;top:281.7px;color:#000">SAMSUNG</div>
<div class="t m" style="left:232.5px;top:281.7px;color:#2848c8;text-decoration:underline">S208</div>
<div class="t m" style="right:457.5px;top:281.7px;">4.00</div>
<div class="t" style="left:312.3px;top:280.9px;font-size:9px">只</div>
<div class="t m" style="left:356.5px;top:281.7px;">SN1234567/68/</div>
<div class="t m" style="right:290.5px;top:281.7px;"><span class=yen>¥</span>4,080.00</div>
<div class="t m" style="right:230.2px;top:281.7px;"><span class=yen>¥</span>16,320.00</div>
<div class="t" style="left:540px;top:280.9px;font-size:9px;color:#2848c8;text-decoration:underline">海南蜂新科技有限公司</div>
<div class="a" style="left:117.2px;top:293.4px;width:43.0px;height:10.1px;background:#ebebeb"></div>
<div class="a" style="left:161.6px;top:293.4px;width:29.1px;height:10.1px;background:#ebebeb"></div>
<div class="a" style="left:192.1px;top:293.4px;width:39.6px;height:10.1px;background:#ebebeb"></div>
<div class="a" style="left:233.1px;top:293.4px;width:45.8px;height:10.1px;background:#ebebeb"></div>
<div class="a" style="left:280.3px;top:293.4px;width:31.1px;height:10.1px;background:#ebebeb"></div>
<div class="a" style="left:312.8px;top:293.4px;width:42.5px;height:10.1px;background:#ebebeb"></div>
<div class="a" style="left:356.7px;top:293.4px;width:61.5px;height:10.1px;background:#ebebeb"></div>
<div class="a" style="left:419.6px;top:293.4px;width:58.5px;height:10.1px;background:#ebebeb"></div>
<div class="a" style="left:479.5px;top:293.4px;width:59.3px;height:10.1px;background:#ebebeb"></div>
<div class="a" style="left:540.2px;top:293.4px;width:102.9px;height:10.1px;background:#ebebeb"></div>
<div class="a" style="left:644.5px;top:293.4px;width:44.5px;height:10.1px;background:#ebebeb"></div>
<div class="a" style="left:690.4px;top:293.4px;width:44.6px;height:10.1px;background:#ebebeb"></div>
<div class="a" style="left:736.4px;top:293.4px;width:9.1px;height:10.1px;background:#ebebeb"></div>
<div class="t m" style="right:578.2px;top:293.0px;">2</div>
<div class="t m" style="left:192.0px;top:293.0px;color:#000">SAMSUNG</div>
<div class="t m" style="left:232.5px;top:293.0px;color:#2848c8;text-decoration:underline">X199</div>
<div class="t m" style="right:457.5px;top:293.0px;">19.00</div>
<div class="t" style="left:312.3px;top:292.2px;font-size:9px">只</div>
<div class="t m" style="right:290.5px;top:293.0px;"><span class=yen>¥</span>3,500.00</div>
<div class="t m" style="right:230.2px;top:293.0px;"><span class=yen>¥</span>66,500.00</div>
<div class="t" style="left:540px;top:292.2px;font-size:9px;color:#2848c8;text-decoration:underline">海南蜂新科技有限公司</div>
<div class="t m" style="right:578.2px;top:304.4px;">3</div>
<div class="t m" style="left:192.0px;top:304.4px;color:#000">SAMSUNG</div>
<div class="t m" style="left:232.5px;top:304.4px;color:#2848c8;text-decoration:underline">T508</div>
<div class="t m" style="right:457.5px;top:304.4px;">11.00</div>
<div class="t" style="left:312.3px;top:303.6px;font-size:9px">只</div>
<div class="t m" style="right:290.5px;top:304.4px;"><span class=yen>¥</span>3,990.00</div>
<div class="t m" style="right:230.2px;top:304.4px;"><span class=yen>¥</span>43,890.00</div>
<div class="t" style="left:540px;top:303.6px;font-size:9px;color:#2848c8;text-decoration:underline">海南蜂新科技有限公司</div>
<div class="a" style="left:117.2px;top:316.1px;width:43.0px;height:10.1px;background:#ebebeb"></div>
<div class="a" style="left:161.6px;top:316.1px;width:29.1px;height:10.1px;background:#ebebeb"></div>
<div class="a" style="left:192.1px;top:316.1px;width:39.6px;height:10.1px;background:#ebebeb"></div>
<div class="a" style="left:233.1px;top:316.1px;width:45.8px;height:10.1px;background:#ebebeb"></div>
<div class="a" style="left:280.3px;top:316.1px;width:31.1px;height:10.1px;background:#ebebeb"></div>
<div class="a" style="left:312.8px;top:316.1px;width:42.5px;height:10.1px;background:#ebebeb"></div>
<div class="a" style="left:356.7px;top:316.1px;width:61.5px;height:10.1px;background:#ebebeb"></div>
<div class="a" style="left:419.6px;top:316.1px;width:58.5px;height:10.1px;background:#ebebeb"></div>
<div class="a" style="left:479.5px;top:316.1px;width:59.3px;height:10.1px;background:#ebebeb"></div>
<div class="a" style="left:540.2px;top:316.1px;width:102.9px;height:10.1px;background:#ebebeb"></div>
<div class="a" style="left:644.5px;top:316.1px;width:44.5px;height:10.1px;background:#ebebeb"></div>
<div class="a" style="left:690.4px;top:316.1px;width:44.6px;height:10.1px;background:#ebebeb"></div>
<div class="a" style="left:736.4px;top:316.1px;width:9.1px;height:10.1px;background:#ebebeb"></div>
<div class="t m" style="right:578.2px;top:315.7px;">4</div>
<div class="t m" style="left:192.0px;top:315.7px;color:#000">SAMSUNG</div>
<div class="t m" style="left:232.5px;top:315.7px;color:#2848c8;text-decoration:underline">A599</div>
<div class="t m" style="right:457.5px;top:315.7px;">2.00</div>
<div class="t" style="left:312.3px;top:314.9px;font-size:9px">只</div>
<div class="t m" style="right:290.5px;top:315.7px;"><span class=yen>¥</span>2,280.00</div>
<div class="t m" style="right:230.2px;top:315.7px;"><span class=yen>¥</span>4,560.00</div>
<div class="t" style="left:540px;top:314.9px;font-size:9px;color:#2848c8;text-decoration:underline">海南蜂新科技有限公司</div>
<div class="t m" style="right:578.2px;top:327.0px;">5</div>
<div class="t m" style="left:192.0px;top:327.0px;color:#000">SAMSUNG</div>
<div class="t m" style="left:232.5px;top:327.0px;color:#2848c8;text-decoration:underline">S108</div>
<div class="t m" style="right:457.5px;top:327.0px;">3.00</div>
<div class="t" style="left:312.3px;top:326.2px;font-size:9px">只</div>
<div class="t m" style="right:290.5px;top:327.0px;"><span class=yen>¥</span>3,150.00</div>
<div class="t m" style="right:230.2px;top:327.0px;"><span class=yen>¥</span>9,450.00</div>
<div class="t" style="left:540px;top:326.2px;font-size:9px;color:#2848c8;text-decoration:underline">海南蜂新科技有限公司</div>
<div class="a" style="left:117.2px;top:338.8px;width:43.0px;height:10.1px;background:#ebebeb"></div>
<div class="a" style="left:161.6px;top:338.8px;width:29.1px;height:10.1px;background:#ebebeb"></div>
<div class="a" style="left:192.1px;top:338.8px;width:39.6px;height:10.1px;background:#ebebeb"></div>
<div class="a" style="left:233.1px;top:338.8px;width:45.8px;height:10.1px;background:#ebebeb"></div>
<div class="a" style="left:280.3px;top:338.8px;width:31.1px;height:10.1px;background:#ebebeb"></div>
<div class="a" style="left:312.8px;top:338.8px;width:42.5px;height:10.1px;background:#ebebeb"></div>
<div class="a" style="left:356.7px;top:338.8px;width:61.5px;height:10.1px;background:#ebebeb"></div>
<div class="a" style="left:419.6px;top:338.8px;width:58.5px;height:10.1px;background:#ebebeb"></div>
<div class="a" style="left:479.5px;top:338.8px;width:59.3px;height:10.1px;background:#ebebeb"></div>
<div class="a" style="left:540.2px;top:338.8px;width:102.9px;height:10.1px;background:#ebebeb"></div>
<div class="a" style="left:644.5px;top:338.8px;width:44.5px;height:10.1px;background:#ebebeb"></div>
<div class="a" style="left:690.4px;top:338.8px;width:44.6px;height:10.1px;background:#ebebeb"></div>
<div class="a" style="left:736.4px;top:338.8px;width:9.1px;height:10.1px;background:#ebebeb"></div>
<div class="t m" style="right:578.2px;top:338.3px;">6</div>
<div class="t m" style="left:192.0px;top:338.3px;color:#000">SAMSUNG</div>
<div class="t m" style="left:232.5px;top:338.3px;color:#2848c8;text-decoration:underline">A509</div>
<div class="t m" style="right:457.5px;top:338.3px;">8.00</div>
<div class="t" style="left:312.3px;top:337.5px;font-size:9px">只</div>
<div class="t m" style="right:290.5px;top:338.3px;"><span class=yen>¥</span>2,380.00</div>
<div class="t m" style="right:230.2px;top:338.3px;"><span class=yen>¥</span>19,040.00</div>
<div class="t" style="left:540px;top:337.5px;font-size:9px;color:#2848c8;text-decoration:underline">海南蜂新科技有限公司</div>
<div class="t m" style="right:578.2px;top:349.7px;">7</div>
<div class="t m" style="left:192.0px;top:349.7px;color:#000">SAMSUNG</div>
<div class="t m" style="left:232.5px;top:349.7px;color:#2848c8;text-decoration:underline">T208</div>
<div class="t m" style="right:457.5px;top:349.7px;">22.00</div>
<div class="t" style="left:312.3px;top:348.9px;font-size:9px">只</div>
<div class="t m" style="right:290.5px;top:349.7px;"><span class=yen>¥</span>3,300.00</div>
<div class="t m" style="right:230.2px;top:349.7px;"><span class=yen>¥</span>72,600.00</div>
<div class="t" style="left:540px;top:348.9px;font-size:9px;color:#2848c8;text-decoration:underline">海南蜂新科技有限公司</div>
<div class="a" style="left:117.2px;top:361.4px;width:43.0px;height:10.1px;background:#ebebeb"></div>
<div class="a" style="left:161.6px;top:361.4px;width:29.1px;height:10.1px;background:#ebebeb"></div>
<div class="a" style="left:192.1px;top:361.4px;width:39.6px;height:10.1px;background:#ebebeb"></div>
<div class="a" style="left:233.1px;top:361.4px;width:45.8px;height:10.1px;background:#ebebeb"></div>
<div class="a" style="left:280.3px;top:361.4px;width:31.1px;height:10.1px;background:#ebebeb"></div>
<div class="a" style="left:312.8px;top:361.4px;width:42.5px;height:10.1px;background:#ebebeb"></div>
<div class="a" style="left:356.7px;top:361.4px;width:61.5px;height:10.1px;background:#ebebeb"></div>
<div class="a" style="left:419.6px;top:361.4px;width:58.5px;height:10.1px;background:#ebebeb"></div>
<div class="a" style="left:479.5px;top:361.4px;width:59.3px;height:10.1px;background:#ebebeb"></div>
<div class="a" style="left:540.2px;top:361.4px;width:102.9px;height:10.1px;background:#ebebeb"></div>
<div class="a" style="left:644.5px;top:361.4px;width:44.5px;height:10.1px;background:#ebebeb"></div>
<div class="a" style="left:690.4px;top:361.4px;width:44.6px;height:10.1px;background:#ebebeb"></div>
<div class="a" style="left:736.4px;top:361.4px;width:9.1px;height:10.1px;background:#ebebeb"></div>
<div class="t m" style="right:578.2px;top:361.0px;">8</div>
<div class="t m" style="left:192.0px;top:361.0px;color:#000">SAMSUNG</div>
<div class="t m" style="left:232.5px;top:361.0px;color:#2848c8;text-decoration:underline">P408</div>
<div class="t m" style="right:457.5px;top:361.0px;">5.00</div>
<div class="t" style="left:312.3px;top:360.2px;font-size:9px">只</div>
<div class="t m" style="right:290.5px;top:361.0px;"><span class=yen>¥</span>5,580.00</div>
<div class="t m" style="right:230.2px;top:361.0px;"><span class=yen>¥</span>27,900.00</div>
<div class="t" style="left:540px;top:360.2px;font-size:9px;color:#2848c8;text-decoration:underline">海南蜂新科技有限公司</div>
<div class="t m" style="right:578.2px;top:372.3px;">9</div>
<div class="t m" style="left:192.0px;top:372.3px;color:#000">SAMSUNG</div>
<div class="t m" style="left:232.5px;top:372.3px;color:#2848c8;text-decoration:underline">X319</div>
<div class="t m" style="right:457.5px;top:372.3px;">1.00</div>
<div class="t" style="left:312.3px;top:371.5px;font-size:9px">只</div>
<div class="t m" style="right:290.5px;top:372.3px;"><span class=yen>¥</span>4,800.00</div>
<div class="t m" style="right:230.2px;top:372.3px;"><span class=yen>¥</span>4,800.00</div>
<div class="t" style="left:540px;top:371.5px;font-size:9px;color:#2848c8;text-decoration:underline">海南蜂新科技有限公司</div>
<div class="a" style="left:117.2px;top:384.1px;width:43.0px;height:10.1px;background:#ebebeb"></div>
<div class="a" style="left:161.6px;top:384.1px;width:29.1px;height:10.1px;background:#ebebeb"></div>
<div class="a" style="left:192.1px;top:384.1px;width:39.6px;height:10.1px;background:#ebebeb"></div>
<div class="a" style="left:233.1px;top:384.1px;width:45.8px;height:10.1px;background:#ebebeb"></div>
<div class="a" style="left:280.3px;top:384.1px;width:31.1px;height:10.1px;background:#ebebeb"></div>
<div class="a" style="left:312.8px;top:384.1px;width:42.5px;height:10.1px;background:#ebebeb"></div>
<div class="a" style="left:356.7px;top:384.1px;width:61.5px;height:10.1px;background:#ebebeb"></div>
<div class="a" style="left:419.6px;top:384.1px;width:58.5px;height:10.1px;background:#ebebeb"></div>
<div class="a" style="left:479.5px;top:384.1px;width:59.3px;height:10.1px;background:#ebebeb"></div>
<div class="a" style="left:540.2px;top:384.1px;width:102.9px;height:10.1px;background:#ebebeb"></div>
<div class="a" style="left:644.5px;top:384.1px;width:44.5px;height:10.1px;background:#ebebeb"></div>
<div class="a" style="left:690.4px;top:384.1px;width:44.6px;height:10.1px;background:#ebebeb"></div>
<div class="a" style="left:736.4px;top:384.1px;width:9.1px;height:10.1px;background:#ebebeb"></div>
<div class="t m" style="right:578.2px;top:383.7px;">10</div>
<div class="t" style="left:192px;top:382.9px;font-size:9px">本公司</div>
<div class="t m" style="left:232.5px;top:383.7px;color:#2848c8;text-decoration:underline">P408 POP</div>
<div class="t m" style="right:457.5px;top:383.7px;">35.00</div>
<div class="t" style="left:312.3px;top:382.9px;font-size:9px">张</div>
<div class="t" style="left:540px;top:382.9px;font-size:9px;color:#2848c8;text-decoration:underline">海南蜂新科技有限公司</div>
<div class="t m" style="right:578.2px;top:395.0px;">11</div>
<div class="t" style="left:192px;top:394.2px;font-size:9px">本公司礼</div>
<div class="t m" style="left:232.5px;top:395.0px;color:#2848c8;text-decoration:underline">手机皮套A</div>
<div class="t m" style="right:457.5px;top:395.0px;">23.00</div>
<div class="t" style="left:312.3px;top:394.2px;font-size:9px">只</div>
<div class="t" style="left:540px;top:394.2px;font-size:9px;color:#2848c8;text-decoration:underline">海南蜂新科技有限公司</div>
<div class="a" style="left:117.2px;top:406.7px;width:43.0px;height:10.1px;background:#ebebeb"></div>
<div class="a" style="left:161.6px;top:406.7px;width:29.1px;height:10.1px;background:#ebebeb"></div>
<div class="a" style="left:192.1px;top:406.7px;width:39.6px;height:10.1px;background:#ebebeb"></div>
<div class="a" style="left:233.1px;top:406.7px;width:45.8px;height:10.1px;background:#ebebeb"></div>
<div class="a" style="left:280.3px;top:406.7px;width:31.1px;height:10.1px;background:#ebebeb"></div>
<div class="a" style="left:312.8px;top:406.7px;width:42.5px;height:10.1px;background:#ebebeb"></div>
<div class="a" style="left:356.7px;top:406.7px;width:61.5px;height:10.1px;background:#ebebeb"></div>
<div class="a" style="left:419.6px;top:406.7px;width:58.5px;height:10.1px;background:#ebebeb"></div>
<div class="a" style="left:479.5px;top:406.7px;width:59.3px;height:10.1px;background:#ebebeb"></div>
<div class="a" style="left:540.2px;top:406.7px;width:102.9px;height:10.1px;background:#ebebeb"></div>
<div class="a" style="left:644.5px;top:406.7px;width:44.5px;height:10.1px;background:#ebebeb"></div>
<div class="a" style="left:690.4px;top:406.7px;width:44.6px;height:10.1px;background:#ebebeb"></div>
<div class="a" style="left:736.4px;top:406.7px;width:9.1px;height:10.1px;background:#ebebeb"></div>
<div class="t m" style="right:578.2px;top:406.3px;">12</div>
<div class="t" style="left:192px;top:405.5px;font-size:9px">联通</div>
<div class="t m" style="left:232.5px;top:406.3px;color:#2848c8;text-decoration:underline">CDMA SIM卡</div>
<div class="t m" style="right:457.5px;top:406.3px;">1.00</div>
<div class="t" style="left:312.3px;top:405.5px;font-size:9px">张</div>
<div class="t m" style="left:356.5px;top:406.3px;">13307682236</div>
<div class="t m" style="right:290.5px;top:406.3px;"><span class=yen>¥</span>50.00</div>
<div class="t m" style="right:230.2px;top:406.3px;"><span class=yen>¥</span>50.00</div>
<div class="t" style="left:540px;top:405.5px;font-size:9px;color:#2848c8;text-decoration:underline">海南蜂新科技有限公司</div>
<div class="t" style="left:645px;top:405.5px;font-size:9px;color:#2848c8;text-decoration:underline">王</div>
<div class="t" style="left:690px;top:405.5px;font-size:9px">华春</div>
<div class="a" style="left:117px;top:281.5px;width:43px;height:11px;border:1px solid #d0d0d0;background:#fff"></div>
<svg class="a" style="left:109px;top:283px" width="5" height="7"><path d="M0.5 0.5L4 3.5L0.5 6.5" stroke="#2040c0" stroke-width="1.2" fill="none"/></svg>
<div class="a" style="left:117px;top:417px;width:629px;height:2.5px;background:#505050"></div>
<div class="t m" style="right:457.5px;top:419.5px">134.00</div>
<div class="t m" style="right:230.20000000000005px;top:419.5px"><span class=yen>¥</span>265,110.00</div>
<div class="a" style="left:747px;top:280px;width:12px;height:236px;background:#fff;border-left:1px solid #505050;border-right:1px solid #a0a0a0"></div>
<div class="btn" style="left:746.6px;top:269.5px;width:11.9px;height:10.5px;line-height:9.9px;font-size:9px"><svg class="a" style="left:2.5px;top:3px" width="6" height="3"><path d="M0 3h6L3 0z" fill="#000"/></svg></div>
<div class="btn" style="left:746.6px;top:280.0px;width:11.9px;height:142.5px;line-height:141.9px;font-size:9px"></div>
<div class="btn" style="left:746.6px;top:505.9px;width:11.9px;height:10.3px;line-height:9.7px;font-size:9px"><svg class="a" style="left:2.5px;top:3px" width="6" height="3"><path d="M0 0h6L3 3z" fill="#000"/></svg></div>
<div class="a" style="left:105.4px;top:517px;width:641px;height:12px;background:#fff;border-top:1px solid #a8a8a8;border-bottom:1px solid #b0b0b0"></div>
<div class="btn" style="left:105.4px;top:517.4px;width:11.6px;height:11.6px;line-height:11.0px;font-size:9px"><svg class="a" style="left:3px;top:2.5px" width="3" height="6"><path d="M3 0v6L0 3z" fill="#000"/></svg></div>
<div class="btn" style="left:117.0px;top:517.4px;width:205.0px;height:11.6px;line-height:11.0px;font-size:9px"></div>
<div class="btn" style="left:735.4px;top:517.4px;width:10.9px;height:11.6px;line-height:11.0px;font-size:9px"><svg class="a" style="left:3px;top:2.5px" width="3" height="6"><path d="M0 0v6L3 3z" fill="#000"/></svg></div>
<div class="a" style="left:0;top:540px;width:768px;height:18px;background:#d4d0c8"></div>
<div class="a" style="left:97px;top:538px;width:671px;height:2px;background:#b8b8b8"></div>
<div class="a mono" style="left:96.0px;top:540px;width:484.3px;height:15px;border-top:1px solid #808080;border-left:1px solid #808080;border-right:1px solid #fff;border-bottom:1px solid #fff;font-size:7.5px;line-height:13px;padding-left:3px;white-space:nowrap;"></div>
<div class="a mono" style="left:581.7px;top:540px;width:48.8px;height:15px;border-top:1px solid #808080;border-left:1px solid #808080;border-right:1px solid #fff;border-bottom:1px solid #fff;font-size:7.5px;line-height:13px;padding-left:3px;white-space:nowrap;padding-left:5px"><b>LAWRON</b></div>
<div class="a mono" style="left:632.6px;top:540px;width:29.0px;height:15px;border-top:1px solid #808080;border-left:1px solid #808080;border-right:1px solid #fff;border-bottom:1px solid #fff;font-size:7.5px;line-height:13px;padding-left:3px;white-space:nowrap;color:#909090;padding-left:4px">CAPS</div>
<div class="a mono" style="left:663.0px;top:540px;width:28.4px;height:15px;border-top:1px solid #808080;border-left:1px solid #808080;border-right:1px solid #fff;border-bottom:1px solid #fff;font-size:7.5px;line-height:13px;padding-left:3px;white-space:nowrap;color:#909090;padding-left:4px">NUM</div>
<div class="a mono" style="left:693.6px;top:540px;width:29.0px;height:15px;border-top:1px solid #808080;border-left:1px solid #808080;border-right:1px solid #fff;border-bottom:1px solid #fff;font-size:7.5px;line-height:13px;padding-left:3px;white-space:nowrap;color:#909090;padding-left:5px">INS</div>
<div class="a mono" style="left:724.8px;top:540px;width:29.8px;height:15px;border-top:1px solid #808080;border-left:1px solid #808080;border-right:1px solid #fff;border-bottom:1px solid #fff;font-size:7.5px;line-height:13px;padding-left:3px;white-space:nowrap;color:#909090;padding-left:4px">SCRL</div>
<div class="a" style="left:94px;top:535px;width:3px;height:5px;background:#000080"></div>
<div class="a" style="left:1.5px;top:535.6px;width:93px;height:19px;background:#d4d0c8;border-top:1px solid #f0f0f0;border-left:1px solid #f0f0f0;border-right:1px solid #404040;border-bottom:1.5px solid #404040"></div>
<div class="a" style="left:3px;top:537px;width:14.5px;height:16px;border-top:1px solid #fff;border-left:1px solid #fff;border-right:1px solid #707070;border-bottom:1px solid #707070"></div>
<div class="a" style="left:18px;top:537px;width:29.5px;height:16px;border-top:1px solid #fff;border-left:1px solid #fff;border-right:1px solid #707070;border-bottom:1px solid #707070"></div>
<div class="a" style="left:48px;top:537px;width:14.5px;height:16px;border-top:1px solid #fff;border-left:1px solid #fff;border-right:1px solid #707070;border-bottom:1px solid #707070"></div>
<div class="a" style="left:63px;top:537px;width:14.5px;height:16px;border-top:1px solid #fff;border-left:1px solid #fff;border-right:1px solid #707070;border-bottom:1px solid #707070"></div>
<div class="a" style="left:78px;top:537px;width:15px;height:16px;border-top:1px solid #fff;border-left:1px solid #fff;border-right:1px solid #707070;border-bottom:1px solid #707070"></div>
<svg class="a" style="left:4px;top:538px" width="14" height="14" viewBox="0 0 14 14"><circle cx="4" cy="4" r="3.2" fill="#e8e000" stroke="#605000" stroke-width="0.8"/><circle cx="9.5" cy="4" r="3.2" fill="#e8e000" stroke="#605000" stroke-width="0.8"/><circle cx="6.8" cy="7" r="3" fill="#e8e000"/><path d="M5 6v6.5M2.5 6.5a2 2 0 0 0 2.5 2.5" stroke="#0020e0" stroke-width="1.6" fill="none"/><path d="M7.5 9.5h5M12.5 9.5a2.6 2.6 0 1 0-0.8 2.2" stroke="#e00000" stroke-width="1.4" fill="none"/></svg>
<div class="t" style="left:20.5px;top:538.5px;font-size:12px;line-height:13px;color:#303030;font-weight:bold">标准</div>
<svg class="a" style="left:50px;top:539px" width="11" height="12" viewBox="0 0 11 12"><path d="M7 0.5C10.5 2.5 11 8.5 7.5 10.5C5 12 1.5 11 0.5 8.5C3.5 10 6.5 8.5 7 5.5C7.3 3.5 7.2 2 7 0.5Z" fill="#000"/></svg>
<div class="a" style="left:66.5px;top:544.5px;width:1.6px;height:1.6px;background:#000"></div>
<svg class="a" style="left:71px;top:543.5px" width="3" height="5" viewBox="0 0 3 5"><path d="M1.5 0.5v2.2L0.3 4.5" stroke="#000" stroke-width="1.5" fill="none"/></svg>
<svg class="a" style="left:79.5px;top:540.5px" width="12" height="10" viewBox="0 0 12 10"><rect x="0.5" y="0.5" width="11" height="9" fill="#e4e4e4" stroke="#a0a0a0"/><path d="M2 3h8M2 5h8M2 7h8" stroke="#a0a0a0" stroke-dasharray="1 1"/></svg>
</div></body></html>
